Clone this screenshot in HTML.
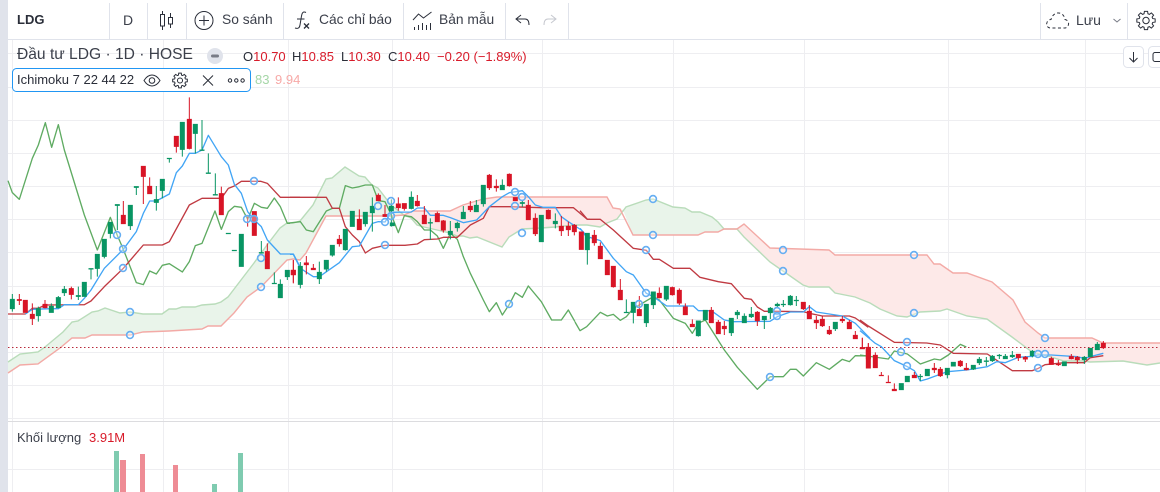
<!DOCTYPE html>
<html><head><meta charset="utf-8"><style>
html,body{margin:0;padding:0;background:#fff;width:1160px;height:492px;overflow:hidden}
body{position:relative;font-family:"Liberation Sans","Noto Sans CJK SC",sans-serif;color:#131722}
svg{position:absolute;left:0;top:0}
.t{position:absolute;white-space:nowrap;line-height:16px}
.r{color:#d81b2a}
</style></head><body>
<svg width="1160" height="492" viewBox="0 0 1160 492" fill="none">
<defs><path id="cog" d="M-1.93-6.73L-1.61-9.16H1.61L1.93-6.73L3.39-6.12L5.34-7.61L7.61-5.34L6.12-3.39L6.73-1.93L9.16-1.61V1.61L6.73 1.93L6.12 3.39L7.61 5.34L5.34 7.61L3.39 6.12L1.93 6.73L1.61 9.16H-1.61L-1.93 6.73L-3.39 6.12L-5.34 7.61L-7.61 5.34L-6.12 3.39L-6.73 1.93L-9.16 1.61V-1.61L-6.73-1.93L-6.12-3.39L-7.61-5.34L-5.34-7.61L-3.39-6.12Z"/></defs>
<!-- grid -->
<g stroke="#eeeef1" stroke-width="1">
<path d="M12.5 40V492M163.5 40V492M288.5 40V492M392.5 40V492M542.5 40V492M673.5 40V492M804.5 40V492M948.5 40V492M1085.5 40V492"/>
<path d="M8 53.5H1160M8 87.5H1160M8 120.5H1160M8 153.5H1160M8 186.5H1160M8 219.5H1160M8 252.5H1160M8 286.5H1160M8 319.5H1160M8 352.5H1160M8 385.5H1160M8 418.5H1160M8 469.5H1160"/>
</g>
<rect x="0" y="0" width="8" height="492" fill="#e0e3eb"/>
<path d="M8 421.5H1160" stroke="#dcdcdf"/>
<!-- cloud fills -->
<polygon fill="#e9f4ea" points="8,362 20,354 38,352 45,347 63,332 72,322 78,321 92,312 98,311 105,308 120,313 130,312 143,314 162,314 169,309 176,309 182,307 195,307 202,305 215,304 221,302 228,297 241,280 254,263 267,245 280,228 287,223 293,223 300,221 313,205 326,179 332,178 345,167 359,176 365,177 372,185 378,188 391,205 404,215 391,216 326,216 313,240 306,253 300,260 293,259 287,260 261,287 247,297 234,313 221,326 208,326 202,329 169,331 143,332 130,335 92,335 85,338 72,338 60,348 38,364 20,365 8,373"/>
<polygon fill="#fde9e8" points="404,215 411,218 417,225 424,227 437,230 450,233 457,236 463,236 470,238 477,237 502,247 509,237 522,229 541,228 555,227 574,225 587,225 600,227 607,223 617,219 623,210 620,209 613,208 607,197 497,197 483,199 463,205 450,211 413,211"/>
<polygon fill="#e9f4ea" points="623,210 626,207 646,200 653,199 673,207 685,208 692,212 700,212 712,217 718,222 724,229 718,232 705,232 698,235 633,235"/>
<polygon fill="#fde9e8" points="737,229 744,237 770,262 783,271 803,285 809,287 829,287 835,293 855,297 870,303 880,309 897,316 907,317 920,312 940,311 947,309 967,316 987,319 1012,337 1032,352 1051,357 1064,361 1084,361 1090,362 1123,361 1147,365 1160,363 1160,343 1103,343 1092,338 1045,338 1038,333 1025,322 1013,300 992,282 967,273 953,273 940,264 934,264 927,255 835,255 829,250 770,248 744,224"/>
<!-- span A -->
<polyline stroke="#b9dcba" stroke-width="1.4" points="8,362 20,354 38,352 45,347 63,332 72,322 78,321 92,312 98,311 105,308 120,313 130,312 143,314 162,314 169,309 176,309 182,307 195,307 202,305 215,304 221,302 228,297 241,280 254,263 267,245 280,228 287,223 293,223 300,221 313,205 326,179 332,178 345,167 359,176 365,177 372,185 378,188 391,205 404,215 411,218 417,225 424,227 437,230 450,233 457,236 463,236 470,238 477,237 502,247 509,237 522,229 541,228 555,227 574,225 587,225 600,227 607,223 617,219 626,207 646,200 653,199 673,207 685,208 692,212 700,212 712,217 718,222 724,229 737,229 744,237 770,262 783,271 803,285 809,287 829,287 835,293 855,297 870,303 880,309 897,316 907,317 920,312 940,311 947,309 967,316 987,319 1012,337 1032,352 1051,357 1064,361 1084,361 1090,362 1123,361 1147,365 1160,363"/>
<!-- span B -->
<polyline stroke="#f3aaa6" stroke-width="1.4" points="8,373 20,365 38,364 60,348 72,338 85,338 92,335 130,335 143,332 169,331 202,329 208,326 221,326 234,313 247,297 261,287 287,260 293,259 300,260 306,253 313,240 326,216 391,216 404,215 413,211 450,211 463,205 483,199 497,197 607,197 613,208 620,209 633,235 698,235 705,232 718,232 724,229 737,229 744,224 770,248 829,250 835,255 927,255 934,264 940,264 953,273 967,273 992,282 1013,300 1025,322 1038,333 1045,338 1092,338 1103,343 1160,343"/>
<!-- dotted price line -->
<path d="M8 347.5H1160" stroke="#b8293a" stroke-width="1" stroke-dasharray="1.5 2.5"/>
<!-- chikou, kijun, tenkan by region -->
<g fill="none" stroke-width="4" stroke-linejoin="round">
<g transform="translate(0,90) scale(.33333)">
<polyline stroke="#5fab62" points="24,272 37,308 58,328 97,205 115,165 136,98 155,172 175,104 193,180 253,375 292,480 331,382 352,436 370,478 409,578 430,584 449,543 469,552 487,526 508,521 547,546 568,515 586,467 606,460 645,363 664,418 685,365 703,349 724,352 743,388 763,340 784,352 802,355 823,324 841,350 862,400 870,400"/>
<polyline stroke="#c03a42" points="24,672 76,672 97,655 115,655 135,645 253,644 273,633 313,590 370,535 430,465 487,465 508,455 568,345 606,325 664,325 685,295 703,288 724,274 783,274 802,280 841,322 900,322"/>
<polyline stroke="#42a5f5" points="76,672 97,658 155,656 175,656 193,644 235,644 253,625 273,600 313,535 370,478 409,425 430,370 449,333 469,333 508,312 529,248 547,228 568,190 586,190 606,180 625,136 664,200 685,225 703,283 724,310 743,365 763,390 784,410 802,450 841,492 880,492 900,530"/>
</g>
<g transform="translate(290,150) scale(.33333)">
<polyline stroke="#5fab62" points="-9,220 31,215 49,240 70,245 109,183 127,175 148,175 166,107 187,114 208,110 226,105 247,105 265,152 285,155 304,195 325,248 343,197 364,200 382,215 403,240 421,240 442,258 460,295 481,250 502,268 520,320 541,370 580,450 598,485 619,458 637,495 658,463 676,428 697,442 715,408 754,455 785,510 814,510 835,480 855,515"/>
<polyline stroke="#c03a42" points="0,142 109,142 127,175 148,175 166,230 187,255 208,275 226,309 247,295 285,286 345,286 382,282 403,269 442,267 460,262 502,262 541,225 580,205 598,170 658,170 754,173 850,173 892,208 900,208"/>
<polyline stroke="#42a5f5" points="0,313 10,313 31,355 70,380 88,380 148,338 187,290 208,288 247,220 265,215 285,216 304,187 364,186 382,174 403,174 421,196 460,196 481,203 520,218 560,210 598,170 637,140 658,128 697,122 715,140 736,165 760,172 796,172 814,200 835,215 874,240 892,265 900,265"/>
</g>
<g transform="translate(580,180) scale(.33333)">
<polyline stroke="#5fab62" points="-15,426 0,452 20,440 61,397 82,408 100,403 121,421 139,410 160,385 178,375 220,350 238,360 280,415 316,430 337,460 355,430 376,420 433,510 472,562 532,628 571,590 610,590 631,568 649,568 670,588 709,548 748,568 787,538 808,545 826,527 865,528"/>
<polyline stroke="#c03a42" points="0,92 22,118 61,118 100,150 160,205 199,211 220,238 238,238 280,265 330,265 360,292 415,305 454,311 493,355 514,358 532,381 553,394 592,394 670,395 688,400 727,408 808,408 826,414 865,442"/>
<polyline stroke="#42a5f5" points="0,145 22,170 61,182 100,235 139,275 160,285 199,340 220,350 260,378 340,378 355,392 394,392 433,420 460,425 570,424 592,410 631,396 670,396 688,380 709,396 787,408 826,430 870,475"/>
</g>
<g transform="translate(860,240) scale(.33333)">
<polyline stroke="#5fab62" points="0,345 85,357 103,333 142,342 181,372 223,357 241,360 265,345 301,313 319,321"/>
<polyline stroke="#c03a42" points="0,240 25,258 103,307 200,309 241,315 280,340 382,342 457,392 517,392 535,385 555,374 613,368 673,368 691,353 730,347"/>
<polyline stroke="#42a5f5" points="0,272 46,310 64,320 103,362 142,380 163,392 181,423 202,417 262,395 320,390 382,380 410,365 436,368 475,352 517,349 533,345 574,345 652,350 673,356 691,350 730,340"/>
</g>
</g>
<!-- candles -->
<g stroke-width="3">
<g transform="translate(0,90) scale(.33333)">
<path fill="#089563" stroke="#089563" d="M37 612V665M31 628h12V656h-12zM115 650V695M109 656h12V677h-12zM154 640V668M148 649h12V667h-12zM175 618V655M169 623h12V653h-12zM193 588V618M187 598h12V608h-12zM235 590V630M229 617h12V619h-12zM253 576V620M247 577h12V619h-12zM273 535V568M267 536h12V537h-12zM292 492V560M286 493h12V535h-12zM313 447V505M307 448h12V499h-12zM331 396V445M325 397h12V430h-12zM352 343V420M346 344h12V346h-12zM391 345V420M385 346h12V407h-12zM409 289V315M403 290h12V292h-12zM469 288V362M463 329h12V337h-12zM487 267V325M481 268h12V301h-12zM508 204V218M502 205h12V206h-12zM547 96V200M541 97h12V178h-12zM586 102V190M580 103h12V130h-12zM606 90V182M600 180h12V181h-12zM625 190V250M619 249h12V250h-12zM646 250V316M640 314h12V315h-12zM679 430h12V431h-12zM697 481h12V482h-12zM718 433h12V529h-12zM784 453V490M778 488h12V489h-12zM823 547V582M817 580h12V581h-12zM841 568V624M835 583h12V623h-12zM862 541V570M856 541h12V560h-12z"/>
<path fill="#d81526" stroke="#d81526" d="M58 612V645M52 629h12V631h-12zM70 631h12V667h-12zM97 640V705M91 673h12V685h-12zM135 630V655M129 643h12V653h-12zM214 590V628M208 596h12V613h-12zM370 333V402M364 376h12V401h-12zM430 228V342M424 229h12V259h-12zM449 262V312M443 289h12V311h-12zM529 138V188M523 139h12V169h-12zM568 22V178M562 88h12V175h-12zM664 290V375M658 311h12V374h-12zM743 380V410M763 364V437M757 365h12V436h-12zM802 460V537M796 485h12V536h-12zM880 510V578M874 541h12V554h-12z"/>
</g>
<g transform="translate(290,150) scale(.33333)">
<path fill="#089563" stroke="#089563" d="M31 336V415M25 349h12V403h-12zM88 335V402M82 367h12V386h-12zM109 330V365M103 331h12V357h-12zM127 285V320M121 286h12V315h-12zM166 237V302M160 238h12V299h-12zM187 183V230M181 184h12V229h-12zM226 186V230M220 187h12V221h-12zM247 142V245M241 169h12V188h-12zM304 148V230M298 169h12V182h-12zM301 219h12V227h-12zM364 124V178M358 142h12V175h-12zM421 205V270M415 218h12V219h-12zM481 213V268M475 244h12V253h-12zM502 215V245M496 220h12V233h-12zM520 168V207M514 187h12V206h-12zM559 150V186M553 166h12V185h-12zM580 105V170M574 106h12V161h-12zM637 88V120M631 106h12V119h-12zM697 150V170M691 158h12V160h-12zM748 196h12V275h-12zM796 190V235M790 214h12V221h-12z"/>
<path fill="#d81526" stroke="#d81526" d="M10 330V400M4 361h12V374h-12zM49 318V373M43 339h12V344h-12zM70 342V360M64 355h12V359h-12zM148 255V290M142 268h12V281h-12zM208 178V240M202 208h12V239h-12zM265 130V153M259 136h12V152h-12zM285 165V200M279 194h12V199h-12zM325 142V182M319 162h12V173h-12zM343 160V182M337 161h12V175h-12zM382 135V170M376 154h12V167h-12zM403 168V222M397 196h12V221h-12zM442 185V216M436 191h12V215h-12zM460 210V248M454 213h12V240h-12zM541 153V186M535 169h12V179h-12zM598 72V120M592 76h12V113h-12zM619 88V125M613 109h12V113h-12zM658 70V110M652 73h12V107h-12zM670 143h12V152h-12zM715 150V210M709 166h12V209h-12zM736 190V258M730 205h12V251h-12zM775 178V208M769 181h12V206h-12zM814 198V258M808 229h12V242h-12zM835 215V258M829 229h12V239h-12zM853 222V256M847 226h12V245h-12z"/>
</g>
<g transform="translate(580,180) scale(.33333)">
<path fill="#089563" stroke="#089563" d="M22 159V254M16 160h12V209h-12zM139 358V398M133 397h12V398h-12zM160 366V430M154 367h12V397h-12zM199 372V441M193 373h12V428h-12zM220 335V387M214 336h12V374h-12zM259 318V363M253 319h12V357h-12zM355 422V470M349 423h12V467h-12zM376 390V422M370 391h12V419h-12zM454 414V468M448 415h12V458h-12zM472 390V417M466 397h12V404h-12zM493 400V429M487 409h12V428h-12zM514 381V414M508 403h12V410h-12zM553 408V447M547 409h12V419h-12zM571 381V417M565 385h12V398h-12zM592 368V384M586 373h12V377h-12zM610 360V381M604 373h12V374h-12zM631 345V377M625 349h12V374h-12zM649 348V378M643 361h12V362h-12zM766 426V453M760 427h12V446h-12z"/>
<path fill="#d81526" stroke="#d81526" d="M-2 156h12V208h-12zM43 150V197M37 166h12V188h-12zM61 187V237M55 199h12V236h-12zM76 241h12V284h-12zM100 258V323M94 259h12V320h-12zM121 297V360M115 331h12V359h-12zM178 348V408M172 389h12V407h-12zM238 322V355M232 340h12V353h-12zM277 320V347M271 323h12V344h-12zM298 325V375M292 331h12V369h-12zM316 370V405M310 381h12V404h-12zM337 418V441M331 433h12V440h-12zM394 381V429M388 391h12V428h-12zM415 420V462M409 427h12V461h-12zM433 423V465M427 439h12V446h-12zM532 393V438M526 397h12V422h-12zM670 366V390M664 367h12V386h-12zM688 375V417M682 394h12V416h-12zM709 408V447M703 421h12V428h-12zM727 408V441M721 418h12V437h-12zM748 438V465M742 451h12V461h-12zM787 408V429M781 418h12V422h-12zM808 420V447M802 427h12V446h-12zM826 453V477M820 466h12V476h-12zM847 474V507M841 505h12V506h-12zM859 502h12V536h-12zM865 489V502"/>
</g>
<g transform="translate(860,240) scale(.33333)">
<path fill="#089563" stroke="#089563" d="M118 431h12V449h-12zM136 409h12V425h-12zM181 402V423M175 409h12V410h-12zM196 388h12V407h-12zM262 384V415M256 385h12V404h-12zM274 367h12V378h-12zM340 375V390M334 376h12V387h-12zM358 351V375M352 358h12V368h-12zM379 351V378M373 363h12V364h-12zM397 345V366M391 349h12V362h-12zM418 342V357M412 346h12V347h-12zM436 342V357M430 349h12V356h-12zM457 333V354M451 346h12V350h-12zM517 330V352M511 334h12V347h-12zM607 366h12V377h-12zM673 348V372M667 352h12V359h-12zM685 325h12V350h-12zM712 306V330M706 313h12V329h-12z"/>
<path fill="#d81526" stroke="#d81526" d="M25 310V385M19 323h12V384h-12zM46 337V384M40 346h12V383h-12zM64 396V408M58 406h12V407h-12zM85 406V429M79 427h12V428h-12zM103 430V453M97 448h12V452h-12zM163 396V414M157 406h12V413h-12zM223 369V399M217 385h12V389h-12zM241 381V411M235 388h12V407h-12zM301 360V381M295 364h12V377h-12zM319 369V391M313 385h12V389h-12zM475 342V363M469 343h12V353h-12zM496 348V366M490 352h12V357h-12zM574 350V374M568 356h12V373h-12zM595 360V378M589 373h12V374h-12zM634 342V358M628 350h12V356h-12zM652 348V372M646 352h12V359h-12zM730 303V327M724 310h12V323h-12z"/>
<path fill="#d81526" stroke="#d81526" d="M7 293V327M1 323h12V326h-12z"/>
</g>
</g>
<!-- markers -->
<g fill="#fff" fill-opacity=".35" stroke="#66aef2" stroke-width="1.6">
<circle cx="117" cy="235" r="3.4"/><circle cx="123" cy="249" r="3.4"/><circle cx="123" cy="268" r="3.4"/><circle cx="130" cy="312" r="3.4"/><circle cx="130" cy="335" r="3.4"/><circle cx="254" cy="181" r="3.4"/><circle cx="247" cy="219" r="3.4"/><circle cx="254" cy="219" r="3.4"/><circle cx="261" cy="258" r="3.4"/><circle cx="261" cy="287" r="3.4"/>
<circle cx="378" cy="206" r="3.4"/><circle cx="391" cy="201" r="3.4"/><circle cx="385" cy="222" r="3.4"/><circle cx="391" cy="216" r="3.4"/><circle cx="385" cy="245" r="3.4"/><circle cx="509" cy="304" r="3.4"/><circle cx="515" cy="192" r="3.4"/><circle cx="522" cy="197" r="3.4"/><circle cx="515" cy="206" r="3.4"/><circle cx="522" cy="233" r="3.4"/>
<circle cx="653" cy="199" r="3.4"/><circle cx="653" cy="235" r="3.4"/><circle cx="646" cy="250" r="3.4"/><circle cx="646" cy="293" r="3.4"/><circle cx="639" cy="304" r="3.4"/><circle cx="770" cy="377" r="3.4"/><circle cx="783" cy="250" r="3.4"/><circle cx="783" cy="271" r="3.4"/><circle cx="777" cy="311" r="3.4"/><circle cx="777" cy="316" r="3.4"/>
<circle cx="914" cy="255" r="3.4"/><circle cx="914" cy="313" r="3.4"/><circle cx="907" cy="342" r="3.4"/><circle cx="901" cy="352" r="3.4"/><circle cx="907" cy="366" r="3.4"/><circle cx="1045" cy="338" r="3.4"/><circle cx="1038" cy="354" r="3.4"/><circle cx="1045" cy="354" r="3.4"/><circle cx="1038" cy="368" r="3.4"/>
</g>
<!-- volume -->
<rect x="114" y="451" width="5" height="41" fill="#7fcbb0"/><rect x="120" y="460" width="6" height="32" fill="#ee8c95"/><rect x="140" y="454" width="5" height="38" fill="#ee8c95"/><rect x="173" y="465" width="5" height="27" fill="#ee8c95"/><rect x="212" y="484" width="5" height="8" fill="#7fcbb0"/><rect x="238" y="453" width="5" height="39" fill="#7fcbb0"/>
<!-- toolbar -->
<rect x="8" y="0" width="1152" height="39" fill="#fff"/>
<path d="M8 39.5H1160" stroke="#e0e3eb"/>
<path d="M109.5 3V39M147.5 3V39M186.5 3V39M283.5 3V39M403.5 3V39M505.5 3V39M568.5 3V39M1040.5 3V39M1127.5 3V39" stroke="#e0e3eb"/>
<g stroke="#2a2e39" stroke-width="1">
<path d="M162.500 11V14M162.500 26V30M170.500 13V17M170.500 24V28"/><rect x="160.500" y="14.500" width="4" height="11.500"/><rect x="168.500" y="17.500" width="4" height="6.500"/>
<circle cx="204" cy="20.500" r="9"/><path d="M204 15.500V25.500M199 20.500H209"/>
<path d="M306 12.500c-3-1.500-4 .5-4.500 3.500l-1.500 9c-.5 3-2 4-5 3M297 19H304.500"/>
<path d="M304 23.500l5 5m0-5l-5 5" stroke-width="1.300"/>
<path d="M413 20l5.500-6 5 4 8-6"/>
<path d="M414.500 30v-3M418.500 30v-5M422.500 30v-7M426.500 30v-5M430.500 30v-7"/>
<path d="M521 15l-5 4 5 4M516 19h9c3 0 4 3 4 6"/>
<path d="M551 15l5 4-5 4M556 19h-8c-3 0-4 3-4 6" stroke="#c6c8cf"/>
<path d="M1050 28c-3-.5-4-3-3-5.500 .5-2 2.500-3 4-3 1-4 4-7 8-6.500 3.500.5 5.500 3 6 6.500 2.500.5 4 2.500 3.500 5-.5 2-2 3.500-3.500 3.500z" stroke-dasharray="3 2.500"/>
<path d="M1113.500 19l3.500 3 3.500-3" stroke="#787b86"/>
<g transform="translate(1146 20.500)"><use href="#cog"/><circle r="3.200"/></g>
</g>
<!-- legend controls -->
<circle cx="215" cy="56" r="8" fill="#e0e3eb"/><rect x="211" y="54.500" width="8" height="3" rx="1.500" fill="#787b86"/>
<rect x="12.500" y="68.500" width="238" height="23" rx="4" fill="#fff" stroke="#2196f3"/>
<g stroke="#2a2e39" stroke-width="1">
<path d="M144 80.500c2.500-4 5-5.500 8-5.500s5.500 1.500 8 5.500c-2.500 4-5 5.500-8 5.500s-5.500-1.500-8-5.500z"/><circle cx="152" cy="80.500" r="2.800"/>
<g transform="translate(180 80.500) scale(.8)" stroke-width="1.250"><use href="#cog"/><circle r="3.200"/></g>
<path d="M203 75.500l10 10M213 75.500l-10 10"/>
<circle cx="230" cy="80.500" r="1.700"/><circle cx="236.300" cy="80.500" r="1.700"/><circle cx="242.600" cy="80.500" r="1.700"/>
</g>
<rect x="1123.500" y="46.500" width="20" height="21" rx="4" fill="#fff" stroke="#e0e3eb"/>
<path d="M1133.500 52V62M1129.500 58l4 4 4-4" stroke="#2a2e39"/>
<rect x="1148.500" y="46.500" width="20" height="21" rx="4" fill="#fff" stroke="#e0e3eb"/>
<path d="M1162 52.500h-7a2 2 0 0 0-2 2v5a2 2 0 0 0 2 2h7" stroke="#2a2e39"/>
</svg>
<div class="t" style="left:17px;top:12px;font-size:13px;font-weight:700;color:#2a2e39">LDG</div>
<div class="t" style="left:123px;top:12px;font-size:14px;color:#3c404b">D</div>
<div class="t" style="left:222px;top:12px;font-size:13.800px;color:#3c404b">So sánh</div>
<div class="t" style="left:319px;top:12px;font-size:13.800px;color:#3c404b">Các chỉ báo</div>
<div class="t" style="left:439px;top:12px;font-size:13.800px;color:#3c404b">Bản mẫu</div>
<div class="t" style="left:1076px;top:12px;font-size:14px;color:#3c404b">Lưu</div>
<div class="t" style="left:17px;top:47px;font-size:15.600px;color:#3c404b">Đầu tư LDG · 1D · HOSE</div>
<div class="t" style="left:243px;top:49px;font-size:13px;color:#2a2e39">O<span class="r">10.70</span></div>
<div class="t" style="left:292px;top:49px;font-size:13px;color:#2a2e39">H<span class="r">10.85</span></div>
<div class="t" style="left:341px;top:49px;font-size:13px;color:#2a2e39">L<span class="r">10.30</span></div>
<div class="t" style="left:388px;top:49px;font-size:13px;color:#2a2e39">C<span class="r">10.40</span></div>
<div class="t r" style="left:437px;top:49px;font-size:13px">−0.20 (−1.89%)</div>
<div class="t" style="left:17px;top:72px;font-size:13px;color:#2a2e39">Ichimoku 7 22 44 22</div>
<div class="t" style="left:255px;top:72px;font-size:13px;color:#a5d6a7">83</div>
<div class="t" style="left:275px;top:72px;font-size:13px;color:#f7a9a7">9.94</div>
<div class="t" style="left:17px;top:430px;font-size:13px;color:#3c404b">Khối lượng</div>
<div class="t r" style="left:89px;top:430px;font-size:13px">3.91M</div>
</body></html>
